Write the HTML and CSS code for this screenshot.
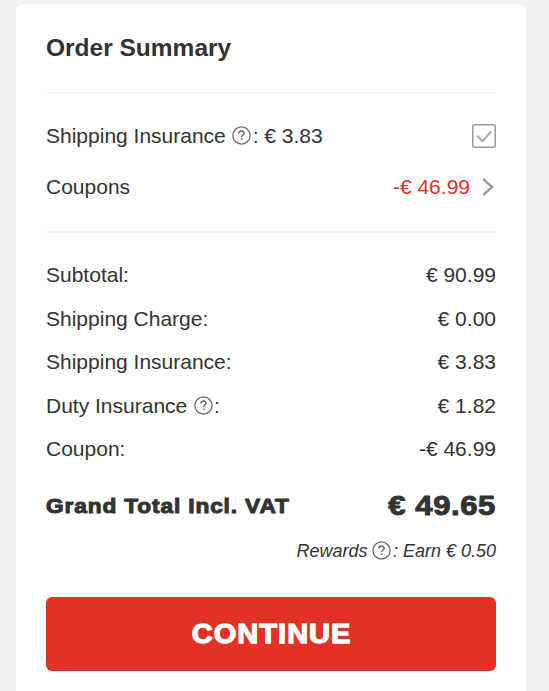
FILE: index.html
```html
<!DOCTYPE html>
<html lang="en">
<head>
<meta charset="utf-8">
<title>Order Summary</title>
<link rel="stylesheet" href="styles.css">
</head>
<body>
<svg width="0" height="0" class="defs">
  <symbol id="help" viewBox="0 0 19 19">
    <circle cx="9.5" cy="9.5" r="8.6" fill="none" stroke="#666" stroke-width="1.3"/>
    <path d="M6.9 7.6C6.9 4.2 12.1 4.3 12.1 7.3C12.1 9.1 9.6 9.1 9.6 11.3" fill="none" stroke="#666" stroke-width="1.4"/>
    <path d="M8.8 12.5h1.6v1.6H8.8z" fill="#666"/>
  </symbol>
</svg>
<main class="card">
  <h1 class="title">Order Summary</h1>
  <section class="options">
    <div class="row option">
      <span>Shipping Insurance <svg class="help"><use href="#help"/></svg>: € 3.83</span>
      <svg class="checkbox" viewBox="0 0 24 24"><rect x=".75" y=".75" width="22.5" height="22.5" rx="2" fill="none" stroke="#999" stroke-width="1.5"/><path d="M5.2 11.8l5.3 5.4L19.3 7.3" fill="none" stroke="#aaa" stroke-width="2"/></svg>
    </div>
    <div class="row option">
      <span>Coupons</span>
      <span class="discount">-€ 46.99<svg class="chevron" viewBox="0 0 12 18"><path d="M1.3 1.2L10 9l-8.7 7.8" fill="none" stroke="#999" stroke-width="2.4"/></svg></span>
    </div>
  </section>
  <section class="totals">
    <div class="row"><span>Subtotal:</span><span>€ 90.99</span></div>
    <div class="row"><span>Shipping Charge:</span><span>€ 0.00</span></div>
    <div class="row"><span>Shipping Insurance:</span><span>€ 3.83</span></div>
    <div class="row"><span>Duty Insurance <svg class="help"><use href="#help"/></svg>:</span><span>€ 1.82</span></div>
    <div class="row"><span>Coupon:</span><span>-€ 46.99</span></div>
  </section>
  <div class="row grand"><span class="grand-label">Grand Total Incl. VAT</span><span class="grand-value">€ 49.65</span></div>
  <div class="rewards">Rewards <svg class="help"><use href="#help"/></svg>: Earn € 0.50</div>
  <button class="continue"><span>CONTINUE</span></button>
</main>
</body>
</html>
```
FILE: styles.css
```css
* { box-sizing: border-box; }
body {
  margin: 0;
  height: 691px;
  overflow: hidden;
  padding: 4px 23px 0 16px;
  background: #f1f1f1;
  color: #333;
  font: 21px/30px "Liberation Sans", Arial, sans-serif;
}
.defs { display: block; height: 0; }
.card {
  height: 720px;
  padding: 0 30px;
  background: #fff;
  border-radius: 6px;
}
.title {
  margin: 0;
  height: 89px;
  padding-top: 29px;
  border-bottom: 1px solid #f1f1f1;
  font-size: 24.5px;
  font-weight: bold;
}
.row {
  display: flex;
  align-items: center;
  justify-content: space-between;
  height: 43.5px;
  white-space: nowrap;
}
.options {
  height: 140px;
  padding-top: 17.5px;
  border-bottom: 2px solid #f1f1f1;
}
.option { height: 51px; }
.help {
  width: 19px;
  height: 19px;
  margin-left: .5px;
  margin-right: 1.5px;
  vertical-align: -2px;
}
.checkbox { width: 24px; height: 24px; }
.discount { display: flex; align-items: center; color: #e43125; }
.chevron { width: 12px; height: 18px; margin: 0 2px 0 12px; }
.totals { padding-top: 20.4px; }
.grand {
  height: 65.4px;
  padding-top: 5px;
  font-weight: bold;
  -webkit-text-stroke: 1px #333;
}
.grand-label {
  letter-spacing: .8px;
  transform: scaleX(1.08);
  transform-origin: left;
}
.grand-value {
  font-size: 28px;
  letter-spacing: .5px;
  transform: scaleX(1.11);
  transform-origin: right;
}
.rewards {
  height: 60.7px;
  font-size: 18px;
  font-style: italic;
  text-align: right;
}
.rewards .help { margin-left: 0; vertical-align: -3px; }
.continue {
  display: block;
  width: 450px;
  height: 74px;
  padding: 0;
  border: 0;
  border-radius: 6px;
  background: #e43125;
  color: #fff;
  font: bold 28px/74px "Liberation Sans", Arial, sans-serif;
  -webkit-text-stroke: 1.3px #fff;
}
.continue span {
  display: inline-block;
  letter-spacing: 1px;
  transform: translateX(.5px) scaleX(1.035);
}
```
